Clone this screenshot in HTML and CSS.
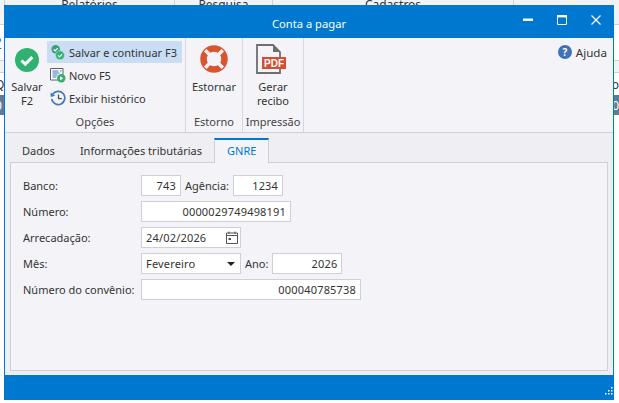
FILE: index.html
```html
<!DOCTYPE html>
<html lang="pt-BR">
<head>
    <meta charset="UTF-8">
    <title>Conta a pagar</title>
    <link rel="stylesheet" href="styles.css">
</head>
<body>
    <!-- app behind the dialog -->
    <div class="backdrop">
        <div class="top-nav">
            <div class="nav-edge"></div>
            <div class="nav-cell nav-rel">Relatórios</div>
            <div class="nav-cell nav-pes">Pesquisa</div>
            <div class="nav-cell nav-cad">Cadastros</div>
            <div class="nav-cell nav-end"></div>
        </div>
        <div class="grid-row row-head"></div>
        <div class="grid-row row-link"><span class="link-bit">?</span></div>
        <div class="grid-row row-band"></div>
        <div class="grid-row row-text"><span>Q</span><span>to</span></div>
        <div class="grid-row row-dark"><span>0</span><span>0</span></div>
    </div>

    <div class="window">
        <div class="title-bar">
            <span class="title-text">Conta a pagar</span>
            <div class="window-controls">
                <svg width="10" height="10" viewBox="0 0 10 10"><rect x="0" y="3.500" width="10" height="2.400" fill="#fff"/></svg>
                <svg width="10" height="10" viewBox="0 0 10 10"><path d="M.5 1h9v8.500h-9z" fill="none" stroke="#fff"/><rect y="0" width="10" height="2.400" fill="#fff"/></svg>
                <svg width="10" height="10" viewBox="0 0 10 10"><path d="M.5.5l9 9M9.500.5l-9 9" stroke="#fff" stroke-width="1.200"/></svg>
            </div>
        </div>

        <div class="ribbon">
            <div class="ribbon-group group-opcoes">
                <div class="group-body">
                    <div class="big-button btn-salvar">
                        <svg class="big-icon" width="24" height="24" viewBox="0 0 24 24">
                            <circle cx="12" cy="12" r="12" fill="#2fb171"/>
                            <path d="M6.500 12.500l3.800 3.600 7-7" fill="none" stroke="#fff" stroke-width="3"/>
                        </svg>
                        <span>Salvar<br>F2</span>
                    </div>
                    <div class="small-buttons">
                        <div class="small-button active">
                            <svg width="16" height="18" viewBox="0 0 16 18">
                                <circle cx="5.700" cy="6.300" r="4.200" fill="#3aa076"/>
                                <path d="M3.700 6.400l1.500 1.400 2.500-2.600" fill="none" stroke="#fff" stroke-width="1.200"/>
                                <circle cx="10" cy="12.300" r="4.500" fill="#2db56f" stroke="#c9def5" stroke-width=".6"/>
                                <path d="M7.900 12.400l1.600 1.500 2.600-2.700" fill="none" stroke="#fff" stroke-width="1.200"/>
                            </svg>
                            <span>Salvar e continuar F3</span>
                        </div>
                        <div class="small-button">
                            <svg width="16" height="18" viewBox="0 0 16 18">
                                <path d="M.5 2.500h12.500v9h-3v2.500h-9.500z" fill="#fff" stroke="#56606c"/>
                                <path d="M2.500 5h6M2.500 7h7M2.500 9h5M2.500 11h4M10 5h1.500" stroke="#3d6fb5"/>
                                <circle cx="11.300" cy="12.300" r="4.200" fill="#2fb171"/>
                                <path d="M10 10.200l3.200 2.100-3.200 2.100z" fill="#fff"/>
                            </svg>
                            <span>Novo F5</span>
                        </div>
                        <div class="small-button">
                            <svg width="16" height="18" viewBox="0 0 16 18">
                                <path d="M2.600 5.500a6.600 6.600 0 1 1-.9 4.500" fill="none" stroke="#3d78c2" stroke-width="1.700"/>
                                <path d="M.6 3.500l4.600 3.200-4.600 1.200z" fill="#3d78c2"/>
                                <path d="M8.500 5.500v4.200h3.300" fill="none" stroke="#4a4f57" stroke-width="1.300"/>
                            </svg>
                            <span>Exibir histórico</span>
                        </div>
                    </div>
                </div>
                <div class="group-label">Opções</div>
            </div>

            <div class="ribbon-group group-estorno">
                <div class="group-body">
                    <div class="big-button">
                        <svg class="big-icon" width="30" height="30" viewBox="0 0 30 30">
                            <circle cx="15" cy="15" r="10.500" fill="none" stroke="#d9552f" stroke-width="6.500"/>
                            <path d="M6.200 6.200l4.500 4.500M23.800 6.200l-4.500 4.500M6.200 23.800l4.500-4.500M23.800 23.800l-4.500-4.500" stroke="#f4f4f8" stroke-width="3.400"/>
                        </svg>
                        <span>Estornar</span>
                    </div>
                </div>
                <div class="group-label">Estorno</div>
            </div>

            <div class="ribbon-group group-impressao">
                <div class="group-body">
                    <div class="big-button">
                        <svg class="big-icon pdf-icon" width="30" height="30" viewBox="0 0 30 30">
                            <path d="M1 1h16l7 7v21h-23z" fill="#f4f4f8" stroke="#6e6e6e" stroke-width="1.800"/>
                            <path d="M17 1v7h7z" fill="#6e6e6e"/>
                            <rect x="6" y="13" width="24" height="12" fill="#d2502f"/>
                            <text x="18" y="23" class="pdf-label" text-anchor="middle">PDF</text>
                        </svg>
                        <span>Gerar<br>recibo</span>
                    </div>
                </div>
                <div class="group-label">Impressão</div>
            </div>

            <div class="help">
                <span class="help-icon">?</span>
                <span class="help-text">Ajuda</span>
            </div>
        </div>

        <div class="content">
            <div class="tabs">
                <div class="tab tab-first">Dados</div>
                <div class="tab">Informações tributárias</div>
                <div class="tab tab-active">GNRE</div>
            </div>
            <div class="tab-panel">
                <div class="form-row">
                    <label>Banco:</label>
                    <div class="field num w-40">743</div>
                    <span class="inline-label">Agência:</span>
                    <div class="field num w-50">1234</div>
                </div>
                <div class="form-row">
                    <label>Número:</label>
                    <div class="field num w-150">0000029749498191</div>
                </div>
                <div class="form-row">
                    <label>Arrecadação:</label>
                    <div class="field w-100 date-field">
                        <span>24/02/2026</span>
                        <svg width="12" height="13" viewBox="0 0 12 13">
                            <path d="M.5 2h11v10.500h-11zM.5 4.500h11M3 .5v2.500M9 .5v2.500" fill="none" stroke="#555"/>
                            <rect x="2.500" y="7" width="2.500" height="2" fill="#555"/>
                        </svg>
                    </div>
                </div>
                <div class="form-row">
                    <label>Mês:</label>
                    <div class="field w-100 select-field">
                        <span>Fevereiro</span>
                        <span class="caret"></span>
                    </div>
                    <span class="inline-label">Ano:</span>
                    <div class="field num w-70">2026</div>
                </div>
                <div class="form-row">
                    <label>Número do convênio:</label>
                    <div class="field num w-220">000040785738</div>
                </div>
            </div>
        </div>

        <div class="status-bar">
            <svg width="9" height="9" viewBox="0 0 9 9" class="grip">
                <path d="M7 0h1.500v1.500H7zM7 3h1.500v1.500H7zM4 3h1.500v1.500H4zM7 6h1.500v1.500H7zM4 6h1.500v1.500H4zM1 6h1.500v1.500H1z" fill="#fff"/>
            </svg>
        </div>
    </div>
</body>
</html>
```

FILE: styles.css
```css
* {
    margin: 0;
    padding: 0;
    box-sizing: border-box;
}

html, body {
    width: 619px;
    height: 403px;
    overflow: hidden;
    background-color: white;
}

body {
    position: relative;
    font-family: "Noto Sans", "Open Sans", sans-serif;
    font-size: 11px;
    color: #333;
}

/* app behind the dialog */
.backdrop {
    font-size: 12px;
}

.top-nav {
    display: flex;
    height: 5px;
    overflow: hidden;
    background-color: #f3f3f6;
}

.nav-edge {
    width: 4px;
}

.nav-cell {
    line-height: 9px;
    text-align: center;
    border-left: 1px solid #d0d0da;
}

.nav-rel { width: 170px; }
.nav-pes { width: 98px; }
.nav-cad { width: 241px; }
.nav-end { flex: 1; }

.grid-row {
    display: flex;
    justify-content: space-between;
    overflow: hidden;
}

.row-head {
    height: 20px;
    background-color: #f3f3f6;
    border-bottom: 1px solid #d0d0da;
}

.row-link {
    height: 35px;
    align-items: center;
}

.link-bit {
    margin-left: -4px;
    color: #2a5fa8;
    text-decoration: underline;
}

.row-band {
    height: 13px;
    background-color: #f3f3f6;
    border-top: 1px solid #d0d0da;
    border-bottom: 1px solid #d0d0da;
}

.row-text {
    height: 22px;
    align-items: center;
}

.row-text span:first-child {
    margin-left: -5px;
}

.row-dark {
    height: 20px;
    align-items: center;
    background-color: #5f7d92;
    color: white;
}

.row-dark span:first-child {
    margin-left: -5px;
}

/* dialog */
.window {
    position: absolute;
    left: 4px;
    top: 5px;
    width: 610px;
    height: 395px;
    display: flex;
    flex-direction: column;
    border-left: 1px solid #0078cf;
    border-right: 1px solid #0078cf;
    background-color: #eeeef3;
}

.title-bar {
    position: relative;
    flex: none;
    height: 33px;
    display: flex;
    align-items: center;
    justify-content: center;
    margin: 0 -1px;
    padding-top: 3px;
    background-color: #0078cf;
    color: white;
    font-size: 11.2px;
}

.window-controls {
    position: absolute;
    right: 13px;
    top: 10px;
    display: flex;
    gap: 24px;
}

/* ribbon */
.ribbon {
    flex: none;
    height: 95px;
    display: flex;
    background-color: #f4f4f8;
    border-bottom: 1px solid #cdd0e0;
}

.ribbon-group {
    display: flex;
    flex-direction: column;
    border-right: 1px solid #d5d7e3;
}

.group-opcoes { width: 181px; }
.group-estorno { width: 57px; }
.group-impressao { width: 61px; }

.group-body {
    flex: 1;
    display: flex;
    justify-content: center;
}

.group-opcoes .group-body {
    justify-content: flex-start;
}

.group-label {
    height: 22px;
    line-height: 23px;
    text-align: center;
    color: #444;
}

.big-button {
    display: flex;
    flex-direction: column;
    align-items: center;
    line-height: 14px;
    text-align: center;
    padding-top: 6px;
}

.btn-salvar {
    width: 44px;
    padding-top: 7px;
}

.btn-salvar .big-icon {
    margin-bottom: 5px;
}

.big-icon {
    height: 30px;
    margin-bottom: 6px;
}

.pdf-icon {
    margin-right: 4px;
}

.small-buttons {
    display: flex;
    flex-direction: column;
    margin-top: 3px;
    margin-left: -2px;
}

.small-button {
    width: 135px;
    height: 22px;
    display: flex;
    align-items: center;
    gap: 3px;
    padding-left: 3px;
    white-space: nowrap;
    margin-bottom: 1px;
}

.small-button.active {
    background-color: #c9def5;
}

.help {
    margin-left: auto;
    display: flex;
    align-items: flex-start;
    gap: 4px;
    padding: 7px 6px 0 0;
    line-height: 15px;
}

.help-text {
    font-size: 11.6px;
}

.help-icon {
    width: 14px;
    height: 14px;
    border-radius: 50%;
    background-color: #3f72b8;
    color: white;
    font-size: 10px;
    font-weight: bold;
    line-height: 14px;
    text-align: center;
}

/* tabs */
.content {
    flex: 1;
    display: flex;
    flex-direction: column;
    padding: 5px 5px 4px 5px;
}

.tabs {
    display: flex;
    height: 25px;
    flex: none;
    position: relative;
    z-index: 1;
    margin-bottom: -1px;
}

.tab {
    padding: 0 12px;
    line-height: 25px;
}

.tab-first {
    padding-right: 13px;
}

.tab-active {
    background-color: #f4f4f8;
    color: #0078cf;
    border-top: 2px solid #0078cf;
    border-left: 1px solid #cfcfdc;
    border-right: 1px solid #cfcfdc;
    line-height: 22px;
}

.tab-panel {
    flex: 1;
    background-color: #f4f4f8;
    border: 1px solid #cfcfdc;
    padding: 12px 0 0 12px;
    display: flex;
    flex-direction: column;
    gap: 5px;
}

/* form */
.form-row {
    display: flex;
    align-items: center;
    height: 21px;
}

.form-row label {
    width: 118px;
    white-space: nowrap;
}

.inline-label {
    padding: 0 4px;
}

.field {
    height: 21px;
    line-height: 19px;
    background-color: white;
    border: 1px solid #cfcfdc;
    padding: 0 4px;
    color: #333;
    letter-spacing: 0.18px;
}

.num { text-align: right; }
.w-40 { width: 40px; }
.w-50 { width: 50px; }
.w-70 { width: 70px; }
.w-100 { width: 100px; }
.w-150 { width: 150px; }
.w-220 { width: 220px; }

.date-field, .select-field {
    display: flex;
    align-items: center;
    justify-content: space-between;
}

.date-field {
    padding-right: 2px;
}

.caret {
    width: 0;
    height: 0;
    border-left: 4px solid transparent;
    border-right: 4px solid transparent;
    border-top: 4px solid #222;
    margin-right: 1px;
}

.pdf-label {
    font-family: "Liberation Sans", sans-serif;
    font-size: 10px;
    font-weight: bold;
    fill: white;
}

.status-bar {
    flex: none;
    height: 25px;
    margin: 0 -1px;
    background-color: #0078cf;
    display: flex;
    align-items: flex-end;
    justify-content: flex-end;
    padding: 0 1px 4px 0;
}
```
